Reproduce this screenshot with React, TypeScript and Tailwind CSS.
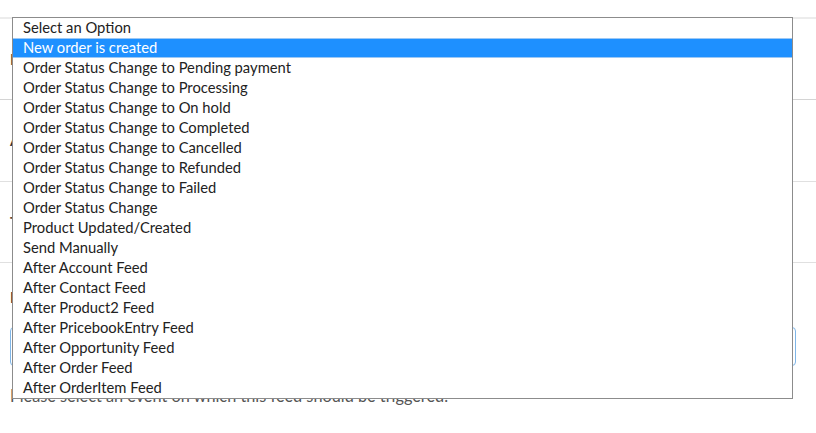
import React from "react";

const options = [
  "Select an Option",
  "New order is created",
  "Order Status Change to Pending payment",
  "Order Status Change to Processing",
  "Order Status Change to On hold",
  "Order Status Change to Completed",
  "Order Status Change to Cancelled",
  "Order Status Change to Refunded",
  "Order Status Change to Failed",
  "Order Status Change",
  "Product Updated/Created",
  "Send Manually",
  "After Account Feed",
  "After Contact Feed",
  "After Product2 Feed",
  "After PricebookEntry Feed",
  "After Opportunity Feed",
  "After Order Feed",
  "After OrderItem Feed",
];

export default function App() {
  return (
    <div
      className="relative w-[816px] h-[433px] bg-white overflow-hidden text-[#333]"
      style={{ fontFamily: "Lato, 'Noto Sans', sans-serif" }}
    >
      {/* background form */}
      <div className="pt-[17px]">
        <div className="h-[82px] border-t-2 border-[#ececec] flex items-center px-[10px]">
          <span className="text-[15px] font-bold text-[#5a4a3a]">Feed</span>
        </div>
        <div className="h-[82px] border-t border-[#d4d4d4] flex items-center px-[10px]">
          <span className="text-[15px] font-bold text-[#333]">Active</span>
        </div>
        <div className="h-[81px] border-t border-[#e0e0e0] flex items-center px-[10px]">
          <span className="text-[15px] font-bold text-[#5a4a3a]">Type</span>
        </div>
        <div className="border-t border-[#e0e0e0] px-[10px] pt-[24px]">
          <div className="text-[15px] font-bold text-[#333] leading-[20px]">Event</div>
          <div className="mt-[20px] h-[39px] w-[786px] rounded-[4px] border border-[#7fb6e8]"></div>
          <div className="mt-[20px] text-[16.3px] leading-[20px] text-[#555]">
            Please select an event on which this feed should be triggered.
          </div>
        </div>
      </div>

      {/* opened select list */}
      <div className="absolute left-[12px] top-[17px] w-[781px] border border-[#8c8c8c] bg-white">
        {options.map((o, i) => (
          <div
            key={o}
            className={
              i === 1
                ? "h-[20px] pl-[10px] pb-[2px] text-[14.75px] bg-[#1e90ff] text-white border-y border-[#9cc8f5] leading-[16px]"
                : "h-[20px] leading-[18px] pb-[2px] pl-[10px] text-[14.75px] text-[#222]"
            }
          >
            {o}
          </div>
        ))}
      </div>
    </div>
  );
}
